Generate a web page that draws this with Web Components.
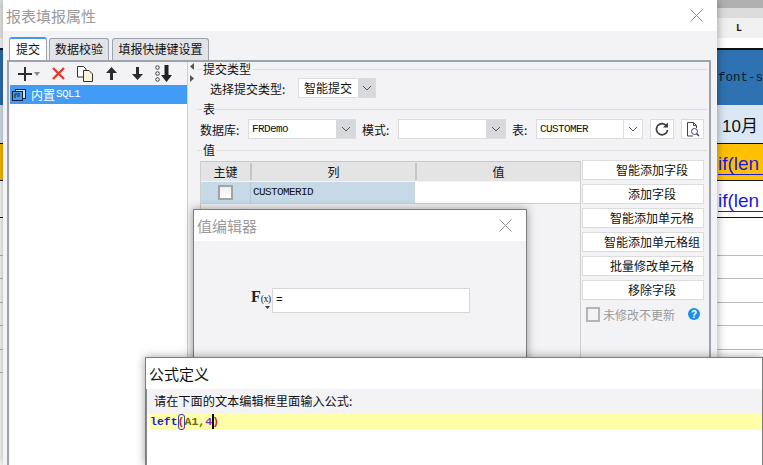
<!DOCTYPE html>
<html>
<head>
<meta charset="utf-8">
<style>
  html, body { margin: 0; padding: 0; width: 763px; height: 465px; overflow: hidden; background: #fff; }
  body { position: relative; font: 12px "Noto Sans CJK SC", sans-serif; color: #111; }
  .abs-main { left: 3px; top: 0; width: 714px; height: 465px; }
  .abs-value { left: 193px; top: 209px; width: 334px; height: 200px; }
  .abs-formula { left: 145px; top: 357px; width: 618px; height: 108px; }
</style>
</head>
<body>

<sheet-backdrop></sheet-backdrop>

<app-window class="abs-main" heading="报表填报属性" tone="#9a9a9a" closable>
  <tab-strip></tab-strip>
  <submit-panel></submit-panel>
</app-window>

<app-window class="abs-value" heading="值编辑器" tone="#9a9a9a" closable framed>
  <value-editor></value-editor>
</app-window>

<app-window class="abs-formula" heading="公式定义" tone="#111" framed>
  <formula-editor></formula-editor>
</app-window>

<script>
const CJK = '"Noto Sans CJK SC", sans-serif';
const MONO = '"Liberation Mono", "Noto Sans CJK SC", monospace';

class SheetBackdrop extends HTMLElement {
  constructor() {
    super();
    this.attachShadow({ mode: 'open' });
    this.shadowRoot.innerHTML = `
      <style>
        :host { display: block; width: 763px; height: 465px; overflow: hidden; background: #fff; }
        .row { box-sizing: border-box; padding-left: 718px; white-space: nowrap; overflow: hidden; display: flex; align-items: center; }
        .top { height: 8px; background: linear-gradient(90deg, #e8e8e8 0 6px, #b0b0b0 6px); }
        .strip { height: 10px; background: linear-gradient(90deg, #eee 0 6px, #dcdcdc 6px); }
        .cols { height: 20px; background: #f0f0f0; font: 700 10px "Liberation Mono", monospace; color: #301020; padding-left: 736px; }
        .gap { height: 12px; border-bottom: 2px solid #111; background: #fff; }
        .blue { height: 55px; background: #2e72b2; font: 12.5px "Liberation Mono", monospace; color: #0b1a28; }
        .month { height: 38px; background: #d9e8f4; font: 17px "Liberation Sans", ${CJK}; color: #111; padding-left: 722px; }
        .amber, .plain { height: 38px; font: 19px "Liberation Sans", sans-serif; color: #1a1ae6; border-bottom: 1px solid #111; }
        .amber { background: #ffc000; border-top: 1px solid #111; }
        .plain { height: 37px; background: #fff; }
        .amber span, .plain span { border-bottom: 1px solid #1a1ae6; width: 60px; display: block; line-height: 21px; margin-top: 3px; }
        .line { height: 23.4px; border-bottom: 1px solid #bbb; }
        .first { height: 38px; }
      </style>
      <div class="row top"></div>
      <div class="row strip"></div>
      <div class="row cols">L</div>
      <div class="row gap"></div>
      <div class="row blue">font-s</div>
      <div class="row month">10月</div>
      <div class="row amber"><span>if(len</span></div>
      <div class="row plain"><span>if(len</span></div>
      <div class="row line first"></div>
      <div class="row line"></div>
      <div class="row line"></div>
      <div class="row line"></div>
      <div class="row line"></div>
      <div class="row line"></div>
    `;
  }
}

class AppWindow extends HTMLElement {
  constructor() {
    super();
    this.attachShadow({ mode: 'open' });
    const tone = this.getAttribute('tone') || '#111';
    const close = this.hasAttribute('closable') ? `
      <svg class="close" width="13" height="13" viewBox="0 0 13 13"><path d="M.5.5l12 12M12.5.5l-12 12" stroke="#8c8c8c" stroke-width="1" fill="none"/></svg>` : '';
    this.shadowRoot.innerHTML = `
      <style>
        :host {
          display: block; position: absolute; box-sizing: border-box; overflow: visible;
          background: #f3f3f5;
          box-shadow: 0 0 9px rgba(0,0,0,.38);
        }
        :host([framed]) { border: 1px solid #7c7c7c; border-bottom: 0; }
        .title {
          height: 31px; background: #fff; display: flex; align-items: center;
          font: 15px/31px ${CJK}; color: ${tone}; padding: 0 14px 0 3px; justify-content: space-between;
        }
        .close { flex: none; }
      </style>
      <div class="title"><span>${this.getAttribute('heading')}</span>${close}</div>
      <slot></slot>
    `;
  }
}

class TabStrip extends HTMLElement {
  constructor() {
    super();
    this.attachShadow({ mode: 'open' });
    this.shadowRoot.innerHTML = `
      <style>
        :host { display: flex; align-items: flex-end; height: 29px; box-sizing: border-box; padding-left: 6px; font: 12px ${CJK}; }
        .tab {
          box-sizing: border-box; height: 22px; margin-right: 2px; text-align: center; line-height: 20px;
          background: #e2e3e8; border: 1px solid #9ca3ad; border-bottom: 0; border-radius: 3px 3px 0 0;
        }
        .on { height: 23px; background: #fff; border-top: 2px solid #3f97ee; border-color: #3f97ee #9ca3ad #9ca3ad; }
      </style>
      <div class="tab on" style="width:38px">提交</div>
      <div class="tab" style="width:60px">数据校验</div>
      <div class="tab" style="width:97px;margin-left:1px">填报快捷键设置</div>
    `;
  }
}

class GroupHead extends HTMLElement {
  constructor() {
    super();
    this.attachShadow({ mode: 'open' });
    this.shadowRoot.innerHTML = `
      <style>
        :host { display: flex; align-items: center; height: 14px; font: 12px/14px ${CJK}; color: #111; }
        i { display: block; height: 1px; background: #dedede; }
        .a { width: 5px; margin-right: 1px; }
        .b { flex: 1; margin-left: 1px; }
      </style>
      <i class="a"></i><slot></slot><i class="b"></i>
    `;
  }
}

class ComboBox extends HTMLElement {
  constructor() {
    super();
    this.attachShadow({ mode: 'open' });
    const mono = this.hasAttribute('mono');
    this.shadowRoot.innerHTML = `
      <style>
        :host { display: flex; box-sizing: border-box; height: 20px; background: #fff; border: 1px solid #dcdcdc; }
        .v { flex: 1; padding-left: ${mono ? 3 : 5}px; white-space: nowrap; overflow: hidden;
             font: ${mono ? '11px/18px ' + MONO : '12px/18px ' + CJK}; letter-spacing: ${mono ? '-.6px' : '0'}; color: #111; }
        .b { flex: none; width: var(--btn, 19px); background: var(--btn-bg, #d8d9dc); display: flex; align-items: center; justify-content: center;
             border-left: var(--btn-line, 0 solid #dcdcdc); }
      </style>
      <div class="v"><slot></slot></div>
      <div class="b"><svg width="10" height="6" viewBox="0 0 10 6"><path d="M1 1l4 4 4-4" stroke="#555" stroke-width="1" fill="none"/></svg></div>
    `;
  }
}

class SideButton extends HTMLElement {
  constructor() {
    super();
    this.attachShadow({ mode: 'open' });
    this.shadowRoot.innerHTML = `
      <style>
        :host { display: block; box-sizing: border-box; height: 20px; background: #fff; border: 1px solid #dcdcdc;
                padding-left: 18px; text-align: center; font: 12px/18px ${CJK}; color: #111; white-space: nowrap; }
      </style>
      <slot></slot>
    `;
  }
}

class FieldTable extends HTMLElement {
  constructor() {
    super();
    this.attachShadow({ mode: 'open' });
    this.shadowRoot.innerHTML = `
      <style>
        :host { display: block; box-sizing: border-box; width: 381px; height: 200px; margin-top: 1px;
                border: 1px solid #cfcfcf; border-top-color: #c9c9c9; font: 12px/19px ${CJK}; color: #111; }
        .r { display: grid; grid-template-columns: 49px 165px 1fr; }
        .head { height: 19px; background: #e4e4e4; text-align: center; }
        .head div + div { border-left: 2px solid #c4c4c4; box-sizing: border-box; margin: 1px 0; line-height: 17px; }
        .data { height: 21px; margin-top: 1px; border-bottom: 1px solid #cfcfcf; background: #fff; }
        .k { background: #c5d9e7; display: flex; align-items: center; justify-content: center; }
        .n { background: #c5d9e7; border-left: 1px solid #b5c7d4; padding-left: 2px; font: 11px/21px ${MONO}; letter-spacing: -.6px; }
        .box { width: 11px; height: 11px; border: 2px solid #a4a4a4; background: linear-gradient(#eee, #fff); }
      </style>
      <div class="r head"><div>主键</div><div>列</div><div>值</div></div>
      <div class="r data"><div class="k"><div class="box"></div></div><div class="n">CUSTOMERID</div><div></div></div>
    `;
  }
}

class SubmitPanel extends HTMLElement {
  constructor() {
    super();
    this.attachShadow({ mode: 'open' });
    this.shadowRoot.innerHTML = `
      <style>
        :host { display: flex; box-sizing: border-box; width: 704px; height: 405px; margin-left: 4px;
                border: 2px solid #9ca3ad; border-bottom: 0; font: 12px ${CJK}; color: #111; }
        .left { flex: none; width: 178px; box-sizing: border-box; padding-left: 1px; display: flex; flex-direction: column; }
        .tools { display: flex; align-items: center; height: 23px; padding-left: 8px; flex: none; }
        .tools svg { flex: none; display: block; }
        .list { background: #fff; flex: 1; }
        .sel { display: flex; align-items: center; height: 19px; background: #429bf5; color: #fff; padding-left: 2px; font: 12px/19px ${CJK}; }
        .sel svg { margin-right: 5px; }
        .sel b { font: 400 11px/19px ${MONO}; letter-spacing: -.6px; margin-left: 1px; }
        .split { flex: none; width: 7px; box-sizing: border-box; border-left: 1px solid #cfcfcf; display: flex; flex-direction: column; align-items: flex-end; gap: 5px; padding-top: 1px; }
        .split svg { display: block; }
        .right { flex: 1; box-sizing: border-box; padding: 0 2px 0 3px; }
        .kind { display: flex; align-items: center; height: 20px; margin-top: 2px; padding-left: 13px; }
        .kind span { width: 88px; }
        .kind combo-box { width: 78px; --btn: 17px; }
        .head-gap { margin-top: 4px; }
        .db { display: grid; grid-template-columns: 48px 108px 42px 108px 30px 107px 31px 30px; align-items: center; margin-top: 3px; padding-left: 3px; height: 20px; }
        .db .lab { padding-left: 6px; }
        .wide { --btn: 18px; --btn-bg: #fff; --btn-line: 1px solid #dcdcdc; }
        .ico { box-sizing: border-box; height: 20px; background: #fff; border: 1px solid #dcdcdc; display: flex; align-items: center; justify-content: center; margin-left: 7px; }
        .work { display: flex; margin-top: 3px; padding-left: 3px; }
        .side { width: 122px; margin-left: 1px; display: flex; flex-direction: column; gap: 4px; }
        .opt { display: flex; align-items: center; height: 14px; margin-top: 3px; padding-left: 4px; color: #9a9a9a; }
        .chk { width: 10px; height: 11px; border: 2px solid #b4b4b4; margin-right: 3px; }
        .opt svg { margin-left: 13px; }
      </style>
      <div class="left">
        <div class="tools">
          <svg width="14" height="14" viewBox="0 0 14 14"><path d="M7 0v14M0 7h14" stroke="#2c2c2c" stroke-width="2"/></svg>
          <svg style="margin-left:2px" width="6" height="4" viewBox="0 0 6 4"><path d="M0 0h6L3 4z" fill="#888"/></svg>
          <svg style="margin-left:12px" width="13" height="13" viewBox="0 0 13 13"><path d="M1 1l11 11M12 1L1 12" stroke="#e23a2e" stroke-width="2.4"/></svg>
          <svg style="margin-left:12px" width="16" height="16" viewBox="0 0 16 16"><path d="M.5.5h6l2.500 2.500v8H.5z" fill="#fff" stroke="#333"/><path d="M6.500 4.500h5.500l3.500 3.500v7.500h-9z" fill="#fdf4dc" stroke="#333"/></svg>
          <svg style="margin-left:13px" width="11" height="13" viewBox="0 0 11 13"><path d="M5.500 0L11 6H7v7H4V6H0z" fill="#2c2c2c"/></svg>
          <svg style="margin-left:15px" width="11" height="13" viewBox="0 0 11 13"><path d="M5.500 13L11 7H7V0H4v7H0z" fill="#2c2c2c"/></svg>
          <svg style="margin-left:12px" width="17" height="17" viewBox="0 0 17 17"><circle cx="2.500" cy="2.500" r="1.800" fill="none" stroke="#444"/><circle cx="2.500" cy="8.500" r="1.800" fill="none" stroke="#444"/><circle cx="2.500" cy="14.500" r="1.800" fill="none" stroke="#444"/><path d="M11.500 17L17 10h-3.500V0h-4v10H6z" fill="#222"/></svg>
        </div>
        <div class="list">
          <div class="sel">
            <svg width="14" height="12" viewBox="0 0 14 12"><rect x="3.500" y=".5" width="10" height="9" fill="#cfe3f7" stroke="#123"/><rect x=".5" y="2.500" width="10" height="9" fill="#4a9bea" stroke="#123"/><path d="M3 5h5M3 5v4M5 7h3" stroke="#123" fill="none"/></svg>
            <span>内置</span><b>SQL1</b>
          </div>
        </div>
      </div>
      <div class="split">
        <svg width="4" height="7" viewBox="0 0 4 7"><path d="M4 0v7L0 3.500z" fill="#555"/></svg>
        <svg width="4" height="7" viewBox="0 0 4 7"><path d="M0 0v7l4-3.500z" fill="#555"/></svg>
      </div>
      <div class="right">
        <group-head>提交类型</group-head>
        <div class="kind"><span>选择提交类型:</span><combo-box>智能提交</combo-box></div>
        <group-head class="head-gap">表</group-head>
        <div class="db">
          <span>数据库:</span><combo-box mono>FRDemo</combo-box>
          <span class="lab">模式:</span><combo-box></combo-box>
          <span class="lab">表:</span><combo-box class="wide" mono>CUSTOMER</combo-box>
          <div class="ico"><svg width="14" height="14" viewBox="0 0 14 14"><path d="M11.800 4.200A5.600 5.600 0 1 0 12.600 8" fill="none" stroke="#3c3c3c" stroke-width="1.700"/><path d="M13 .5v5H8z" fill="#3c3c3c"/></svg></div>
          <div class="ico"><svg width="14" height="15" viewBox="0 0 14 15"><path d="M7 14H1.500V.5h6l3 3V6" fill="none" stroke="#444"/><path d="M7.500.5v3h3" fill="none" stroke="#444"/><circle cx="8.500" cy="9.500" r="3" fill="none" stroke="#446"/><path d="M10.500 11.500l2.500 2.500" stroke="#446" stroke-width="1.500"/></svg></div>
        </div>
        <group-head class="head-gap">值</group-head>
        <div class="work">
          <field-table></field-table>
          <div class="side">
            <side-button>智能添加字段</side-button>
            <side-button>添加字段</side-button>
            <side-button>智能添加单元格</side-button>
            <side-button>智能添加单元格组</side-button>
            <side-button>批量修改单元格</side-button>
            <side-button>移除字段</side-button>
            <div class="opt"><div class="chk"></div><span>未修改不更新</span>
              <svg width="12" height="12" viewBox="0 0 12 12"><circle cx="6" cy="6" r="6" fill="#1a8fe3"/><text x="6" y="9.500" text-anchor="middle" font-family="Liberation Sans" font-weight="700" font-size="10" fill="#fff">?</text></svg>
            </div>
          </div>
        </div>
      </div>
    `;
  }
}

class ValueEditor extends HTMLElement {
  constructor() {
    super();
    this.attachShadow({ mode: 'open' });
    this.shadowRoot.innerHTML = `
      <style>
        :host { display: flex; align-items: flex-start; padding: 47px 0 0 57px; }
        .fx { position: relative; width: 21px; height: 25px; font-family: "Liberation Serif", serif; color: #222; display: flex; align-items: baseline; line-height: 18px; }
        .fx b { font-size: 16px; font-weight: 700; }
        .fx span { font-size: 10px; letter-spacing: -.7px; }
        .fx svg { position: absolute; left: 14px; top: 18px; }
        .input { box-sizing: border-box; width: 198px; height: 25px; background: #fff; border: 1px solid #d6d6d6; padding-left: 3px; font: 11px/23px ${MONO}; color: #111; }
      </style>
      <div class="fx"><b>F</b><span>(x)</span><svg width="5" height="3" viewBox="0 0 5 3"><path d="M0 0h5L2.500 3z" fill="#333"/></svg></div>
      <div class="input">=</div>
    `;
  }
}

class FormulaEditor extends HTMLElement {
  constructor() {
    super();
    this.attachShadow({ mode: 'open' });
    this.shadowRoot.innerHTML = `
      <style>
        :host { display: block; height: 76px; background: #fff; border-left: 1px solid #8a8a8a; }
        .label { height: 25px; background: #f3f3f5; padding-left: 7px; font: 12.2px/25px ${CJK}; color: #111; }
        .code { height: 16px; margin-left: 3px; background: #ffffa8; font: 700 11.5px/15px ${MONO}; white-space: pre; color: #111; display: flex; }
        .kw { color: #1a1af0; }
        .br { color: #e0203a; }
        .m { outline: 1px solid #3a3ac8; outline-offset: -1px; border-radius: 3px; }
        .ref { color: #6a6a10; }
        .num { color: #7a2bc0; }
        .caret { width: 2px; height: 15px; background: #000; margin-right: -2px; }
      </style>
      <div class="label">请在下面的文本编辑框里面输入公式:</div>
      <div class="code"><span class="kw">left</span><span class="br m">(</span><span class="ref">A1,</span><span class="num">4</span><span class="caret"></span><span class="br">)</span></div>
    `;
  }
}

customElements.define('sheet-backdrop', SheetBackdrop);
customElements.define('app-window', AppWindow);
customElements.define('tab-strip', TabStrip);
customElements.define('group-head', GroupHead);
customElements.define('combo-box', ComboBox);
customElements.define('side-button', SideButton);
customElements.define('field-table', FieldTable);
customElements.define('submit-panel', SubmitPanel);
customElements.define('value-editor', ValueEditor);
customElements.define('formula-editor', FormulaEditor);
</script>
</body>
</html>
